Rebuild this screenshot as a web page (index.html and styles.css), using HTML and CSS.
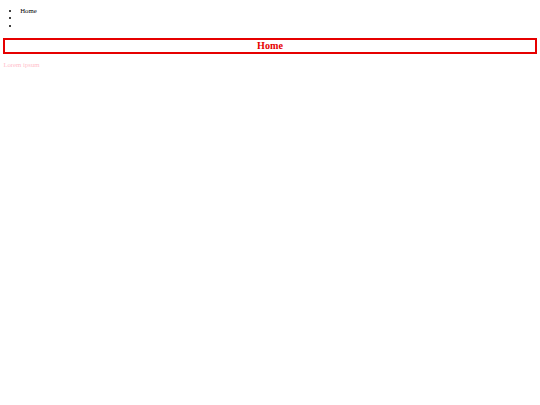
FILE: index.html
```html
<!DOCTYPE html>
<html>
<head>
<meta charset="utf-8">
<link rel="stylesheet" href="styles.css">
</head>
<body class="page">
<ul class="nav">
  <li class="nav-item">Home</li>
  <li class="nav-item"></li>
  <li class="nav-item"></li>
</ul>
<h2 class="title">Home</h2>
<p class="lorem">Lorem ipsum</p>
</body>
</html>
```
FILE: styles.css
```css
html, body {
  background: #fff;
}
.page {
  margin: 0;
  padding: 3.375px;
  display: flow-root;
  font-family: "Liberation Serif", serif;
  font-size: 6.75px;
  color: #000;
}
.nav {
  margin: 3.375px 0 6.75px;
  padding-left: 16.875px;
  list-style: disc;
}
.nav-item {
  height: 7.6px;
  line-height: 7.6px;
}
.title {
  margin: 8.4px 0 7.6px;
  font-size: 10.125px;
  font-weight: bold;
  color: #e60000;
  text-align: center;
  border: 2px solid #e60000;
  line-height: 11.6px;
}
.lorem {
  margin: 6.75px 0;
  color: #ffc0cb;
  line-height: 7.6px;
}
```
